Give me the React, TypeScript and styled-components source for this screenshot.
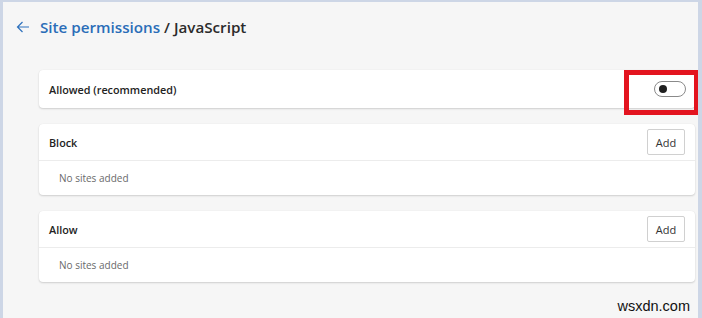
import React from "react";
import styled, { createGlobalStyle } from "styled-components";

const GlobalStyle = createGlobalStyle`
  html, body {
    margin: 0;
    padding: 0;
    background: #f6f6f6;
  }
  body {
    font-family: "Open Sans", "Noto Sans", sans-serif;
  }
`;

const Page = styled.div`
  position: relative;
  box-sizing: border-box;
  width: 702px;
  height: 318px;
  background: #f6f6f6;
  border-left: 3px solid #cdd6e6;
  border-top: 2px solid #cdd6e6;
  border-right: 4px solid #cdd6e6;
  padding: 0 3px 0 36px;
  overflow: hidden;
`;

const Header = styled.div`
  display: flex;
  align-items: center;
  height: 50px;
  margin-left: -25px;
  gap: 8px;
`;

const BackButton = styled.button`
  display: flex;
  align-items: center;
  justify-content: center;
  width: 18px;
  height: 18px;
  padding: 0;
  border: 0;
  background: none;
  color: #2f72bd;
  cursor: pointer;
`;

const Title = styled.h1`
  margin: 0;
  font-size: 15.2px;
  font-weight: 600;
  color: #2b2b2b;
`;

const Crumb = styled.span`
  color: #2a6db8;
`;

const Stack = styled.div`
  display: flex;
  flex-direction: column;
  gap: 16px;
  margin-top: 18px;
`;

const Card = styled.div`
  position: relative;
  background: #fff;
  border-radius: 4px;
  box-shadow: 0 1px 2px rgba(0, 0, 0, 0.16), 0 0 1px rgba(0, 0, 0, 0.08);
`;

const Row = styled.div<{ $height: number }>`
  display: flex;
  align-items: center;
  justify-content: space-between;
  height: ${(p) => p.$height}px;
  padding: 0 10px 0 10px;
`;

const Label = styled.span`
  font-size: 10.8px;
  font-weight: 600;
  color: #222;
`;

const Divider = styled.div`
  height: 1px;
  background: #ececec;
`;

const Empty = styled.div`
  display: flex;
  align-items: center;
  height: 34px;
  padding-left: 20px;
  font-size: 10px;
  color: #6a6a6a;
`;

const AddButton = styled.button`
  width: 38px;
  height: 26px;
  padding: 0;
  border: 1px solid #d0d0d0;
  border-radius: 2px;
  background: #fff;
  font-family: "Open Sans", "Noto Sans", sans-serif;
  font-size: 11px;
  color: #333;
  cursor: pointer;
`;

const Toggle = styled.div`
  position: relative;
  box-sizing: border-box;
  width: 32px;
  height: 16px;
  margin-right: -1px;
  border: 1px solid #8a8a8a;
  border-radius: 8px;
  background: #fff;
`;

const Knob = styled.span`
  position: absolute;
  top: 3px;
  left: 4px;
  width: 8px;
  height: 8px;
  border-radius: 50%;
  background: #1f1f1f;
`;

const Highlight = styled.div`
  position: absolute;
  top: 0;
  right: -4px;
  width: 75px;
  height: 45px;
  box-sizing: border-box;
  border: 5px solid #e3141f;
  pointer-events: none;
`;

const Watermark = styled.div`
  position: absolute;
  right: 8px;
  bottom: 4px;
  font-family: "Liberation Sans", Arial, sans-serif;
  font-size: 14.5px;
  color: #111;
`;

const ListCard: React.FC<{ title: string }> = ({ title }) => (
  <Card>
    <Row $height={36}>
      <Label>{title}</Label>
      <AddButton>Add</AddButton>
    </Row>
    <Divider />
    <Empty>No sites added</Empty>
  </Card>
);

const App: React.FC = () => (
  <>
    <GlobalStyle />
    <Page>
      <Header>
        <BackButton aria-label="Back">
          <svg width="16" height="16" viewBox="0 0 16 16" fill="none">
            <path d="M14 8H2.5M7.5 3L2.5 8l5 5" stroke="currentColor" strokeWidth="1.2" />
          </svg>
        </BackButton>
        <Title>
          <Crumb>Site permissions</Crumb> / JavaScript
        </Title>
      </Header>
      <Stack>
        <Card>
          <Row $height={38}>
            <Label>Allowed (recommended)</Label>
            <Toggle>
              <Knob />
            </Toggle>
          </Row>
          <Highlight />
        </Card>
        <ListCard title="Block" />
        <ListCard title="Allow" />
      </Stack>
      <Watermark>wsxdn.com</Watermark>
    </Page>
  </>
);

export default App;
